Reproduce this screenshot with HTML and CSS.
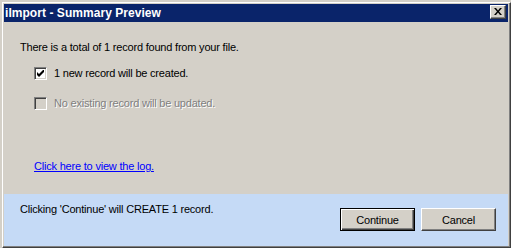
FILE: index.html
```html
<!DOCTYPE html>
<html>
<head>
<meta charset="utf-8">
<link rel="stylesheet" href="styles.css">
</head>
<body>
<div class="window">
  <div class="titlebar">
    <span class="title">iImport - Summary Preview</span>
    <span class="close">
      <svg width="8" height="7" viewBox="0 0 8 7"><path d="M0 0h2l2 2.5L6 0h2L5 3.5 8 7H6L4 4.5 2 7H0l3-3.5z" fill="#000"/></svg>
    </span>
  </div>
  <div class="main">
    <p class="line">There is a total of 1 record found from your file.</p>
    <div class="checks">
      <div class="row">
        <span class="cb">
          <svg width="7" height="7" viewBox="0 0 7 7"><path d="M0 2v3l2 2 5-5V-1L2 4z" fill="#000"/></svg>
        </span>
        <span class="label">1 new record will be created.</span>
      </div>
      <div class="row second">
        <span class="cb disabled"></span>
        <span class="label dis">No existing record will be updated.</span>
      </div>
      <a class="log" href="#">Click here to view the log.</a>
    </div>
  </div>
  <div class="footer">
    <span class="ftext">Clicking 'Continue' will CREATE 1 record.</span>
    <div class="buttons">
      <button class="btn default">Continue</button>
      <button class="btn">Cancel</button>
    </div>
  </div>
</div>
</body>
</html>
```
FILE: styles.css
```css
html, body {
  margin: 0;
  padding: 0;
}
body {
  width: 511px;
  height: 248px;
  background: #d4d0c8;
  overflow: hidden;
  font-family: "Liberation Sans", Arial, sans-serif;
  font-size: 11px;
  letter-spacing: -0.2px;
  color: #000;
}
.window {
  margin: 2px 0 0 2px;
  width: 509px;
  height: 246px;
  box-sizing: border-box;
  border-top: 1px solid #fff;
  border-left: 1px solid #fff;
  border-right: 1px solid #404040;
  border-bottom: 1px solid #404040;
  box-shadow: inset -1px -1px 0 #808080;
  padding: 1px 2px 1px 1px;
  background: #d4d0c8;
  display: flex;
  flex-direction: column;
}
.titlebar {
  height: 18px;
  background: #0a246a;
  display: flex;
  align-items: center;
  justify-content: space-between;
  padding: 0 2px 0 1px;
  flex: none;
}
.title {
  color: #fff;
  font-weight: bold;
  font-size: 12px;
  letter-spacing: 0.05px;
  line-height: 18px;
  white-space: nowrap;
}
.close {
  width: 16px;
  height: 14px;
  box-sizing: border-box;
  background: #d4d0c8;
  border-top: 1px solid #fff;
  border-left: 1px solid #fff;
  border-right: 1px solid #404040;
  border-bottom: 1px solid #404040;
  box-shadow: inset -1px -1px 0 #808080;
  display: flex;
  align-items: center;
  justify-content: center;
  margin-top: -2px;
}
.close svg { display: block; margin: 0 1px 1px 0; }
.main {
  height: 172px;
  box-sizing: border-box;
  padding: 19px 0 0 16px;
  flex: none;
}
.line {
  margin: 0;
  line-height: 13px;
  white-space: nowrap;
}
.checks {
  margin-left: 14px;
  display: flex;
  flex-direction: column;
  align-items: flex-start;
}
.row {
  display: flex;
  align-items: center;
  height: 13px;
  margin-top: 13px;
}
.row.second { margin-top: 17px; }
.cb {
  width: 13px;
  height: 13px;
  box-sizing: border-box;
  background: #fff;
  border-top: 1px solid #808080;
  border-left: 1px solid #808080;
  border-right: 1px solid #fff;
  border-bottom: 1px solid #fff;
  box-shadow: inset 1px 1px 0 #404040, inset -1px -1px 0 #d4d0c8;
  display: flex;
  align-items: center;
  justify-content: center;
  flex: none;
}
.cb svg { display: block; }
.cb.disabled { background: #d4d0c8; }
.label {
  margin-left: 7px;
  line-height: 13px;
  white-space: nowrap;
}
.label.dis {
  color: #808080;
  text-shadow: 1px 1px 0 #fff;
}
.log {
  margin-top: 50px;
  color: #0000ff;
  line-height: 13px;
  text-decoration: underline;
  white-space: nowrap;
}
.footer {
  flex: 1;
  background: #c5daf6;
  display: flex;
  justify-content: space-between;
  align-items: flex-start;
  padding: 9px 12px 0 16px;
}
.ftext {
  line-height: 13px;
  white-space: nowrap;
}
.buttons {
  display: flex;
  gap: 6px;
  margin-top: 5px;
}
.btn {
  width: 75px;
  height: 23px;
  box-sizing: border-box;
  background: #d4d0c8;
  font-family: "Liberation Sans", Arial, sans-serif;
  font-size: 11px;
  letter-spacing: -0.2px;
  color: #000;
  padding: 0;
  border-top: 1px solid #fff;
  border-left: 1px solid #fff;
  border-right: 1px solid #404040;
  border-bottom: 1px solid #404040;
  box-shadow: inset -1px -1px 0 #808080;
}
.btn.default {
  border: 1px solid #000;
  box-shadow: inset 1px 1px 0 #fff, inset -1px -1px 0 #404040, inset -2px -2px 0 #808080;
}
```
